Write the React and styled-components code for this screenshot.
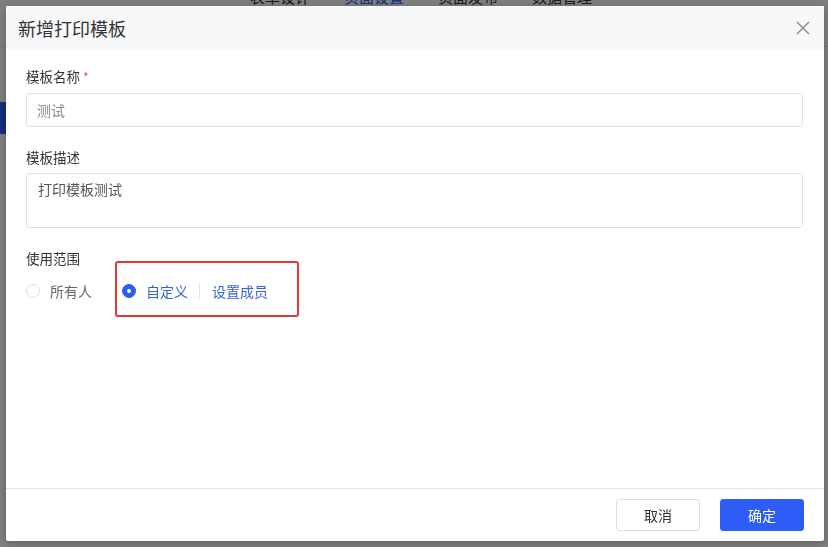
import React, { useState } from 'react';
import styled, { createGlobalStyle } from 'styled-components';

const GlobalStyle = createGlobalStyle`
  html, body {
    margin: 0;
    padding: 0;
    height: 100%;
  }
  body {
    font-family: 'Noto Sans CJK SC', 'Noto Sans', sans-serif;
    background: #ffffff;
    overflow: hidden;
  }
  * { box-sizing: border-box; }
`;

const Page = styled.div`
  position: relative;
  width: 828px;
  height: 547px;
  background: #ffffff;
`;

const NavBar = styled.div`
  display: flex;
  gap: 34px;
  padding-left: 250px;
  margin-top: -13px;
  height: 60px;
  border-bottom: 1px solid #e5e5e5;
  font-size: 15px;
  line-height: 20px;
  color: #333;
`;

const NavItem = styled.span`
  color: ${p => (p.$active ? '#2d5cf6' : '#333')};
`;

const SideTab = styled.div`
  margin-top: 55px;
  width: 120px;
  height: 32px;
  background: #2d5cf6;
`;

const Mask = styled.div`
  position: fixed;
  inset: 0;
  background: rgba(0, 0, 0, 0.5);
`;

const Dialog = styled.div`
  position: fixed;
  left: 6px;
  top: 6px;
  width: 818px;
  height: 535px;
  background: #fff;
  border-radius: 2px;
  box-shadow: 0 2px 8px rgba(0, 0, 0, 0.25);
  display: flex;
  flex-direction: column;
`;

const Header = styled.div`
  height: 44px;
  flex: none;
  display: flex;
  align-items: center;
  justify-content: space-between;
  padding: 0 12px 0 12px;
  background: #f7f8fa;
`;

const Title = styled.h2`
  margin: 0;
  font-size: 18px;
  font-weight: 400;
  color: #333;
`;

const CloseButton = styled.button`
  border: none;
  background: none;
  padding: 0;
  width: 18px;
  height: 18px;
  display: flex;
  align-items: center;
  justify-content: center;
  cursor: pointer;
`;

const Body = styled.div`
  flex: 1;
  padding: 16px 21px 0 20px;
  display: flex;
  flex-direction: column;
`;

const Field = styled.div`
  display: flex;
  flex-direction: column;
  gap: ${p => p.$gap || 6}px;
  margin-bottom: ${p => p.$mb || 0}px;
`;

const Label = styled.label`
  font-size: 13.5px;
  line-height: 20px;
  color: #333;
`;

const Required = styled.span`
  color: #e5484d;
  margin-left: 3px;
  font-size: 12px;
`;

const TextInput = styled.input`
  height: 34px;
  border: 1px solid #e2e2e2;
  border-radius: 3px;
  padding: 0 10px;
  font: inherit;
  font-size: 14px;
  color: #888;
  outline: none;
`;

const TextArea = styled.textarea`
  height: 55px;
  border: 1px solid #e2e2e2;
  border-radius: 3px;
  padding: 5px 11px;
  font: inherit;
  font-size: 14px;
  line-height: 20px;
  color: #555;
  resize: none;
  outline: none;
`;

const RadioRow = styled.div`
  display: flex;
  align-items: center;
  height: 20px;
  margin-top: 7px;
`;

const RadioItem = styled.label`
  display: flex;
  align-items: center;
  gap: 10px;
  font-size: 14px;
  color: ${p => (p.$checked ? '#3464d8' : '#666')};
  margin-right: ${p => p.$mr || 0}px;
  cursor: pointer;
`;

const RadioDot = styled.span`
  width: 14px;
  height: 14px;
  border-radius: 50%;
  border: 1px solid ${p => (p.$checked ? '#2d5cf6' : '#dcdcdc')};
  background: ${p => (p.$checked ? '#2d5cf6' : '#fff')};
  display: flex;
  align-items: center;
  justify-content: center;
  &::after {
    content: '';
    width: 4px;
    height: 4px;
    border-radius: 50%;
    background: #fff;
    display: ${p => (p.$checked ? 'block' : 'none')};
  }
`;

const CustomGroup = styled.div`
  position: relative;
  display: flex;
  align-items: center;
`;

const Highlight = styled.div`
  position: absolute;
  left: -7px;
  top: -20px;
  width: 184px;
  height: 56px;
  border: 2px solid #e53935;
  border-radius: 3px;
  pointer-events: none;
`;

const Divider = styled.span`
  width: 1px;
  height: 16px;
  background: #e2e2e2;
  margin: 0 12px 0 11px;
`;

const LinkText = styled.a`
  font-size: 14px;
  color: #3464d8;
  text-decoration: none;
  cursor: pointer;
`;

const Footer = styled.div`
  height: 53px;
  flex: none;
  border-top: 1px solid #e5e5e5;
  display: flex;
  align-items: center;
  justify-content: flex-end;
  gap: 20px;
  padding: 0 20px;
`;

const Button = styled.button`
  width: 84px;
  height: 32px;
  border-radius: 3px;
  font: inherit;
  font-size: 14px;
  cursor: pointer;
  border: 1px solid ${p => (p.$primary ? '#2d5cf6' : '#dedede')};
  background: ${p => (p.$primary ? '#2d5cf6' : '#fff')};
  color: ${p => (p.$primary ? '#fff' : '#333')};
`;

function CloseIcon() {
  return (
    <svg width="14" height="14" viewBox="0 0 14 14" fill="none">
      <path d="M1 1L13 13M13 1L1 13" stroke="#888" strokeWidth="1.3" />
    </svg>
  );
}

export default function App() {
  const [scope, setScope] = useState('custom');

  return (
    <>
      <GlobalStyle />
      <Page>
        <NavBar>
          <NavItem>表单设计</NavItem>
          <NavItem $active>页面设置</NavItem>
          <NavItem>页面发布</NavItem>
          <NavItem>数据管理</NavItem>
        </NavBar>
        <SideTab />
        <Mask />
        <Dialog>
          <Header>
            <Title>新增打印模板</Title>
            <CloseButton aria-label="关闭">
              <CloseIcon />
            </CloseButton>
          </Header>
          <Body>
            <Field $mb={20}>
              <Label>
                模板名称<Required>*</Required>
              </Label>
              <TextInput defaultValue="测试" />
            </Field>
            <Field $mb={20}>
              <Label>模板描述</Label>
              <TextArea defaultValue="打印模板测试" />
            </Field>
            <Field $gap={6}>
              <Label>使用范围</Label>
              <RadioRow>
                <RadioItem $mr={30} onClick={() => setScope('all')}>
                  <RadioDot $checked={scope === 'all'} />
                  所有人
                </RadioItem>
                <CustomGroup>
                  <Highlight />
                  <RadioItem $checked={scope === 'custom'} onClick={() => setScope('custom')}>
                    <RadioDot $checked={scope === 'custom'} />
                    自定义
                  </RadioItem>
                  <Divider />
                  <LinkText>设置成员</LinkText>
                </CustomGroup>
              </RadioRow>
            </Field>
          </Body>
          <Footer>
            <Button>取消</Button>
            <Button $primary>确定</Button>
          </Footer>
        </Dialog>
      </Page>
    </>
  );
}
